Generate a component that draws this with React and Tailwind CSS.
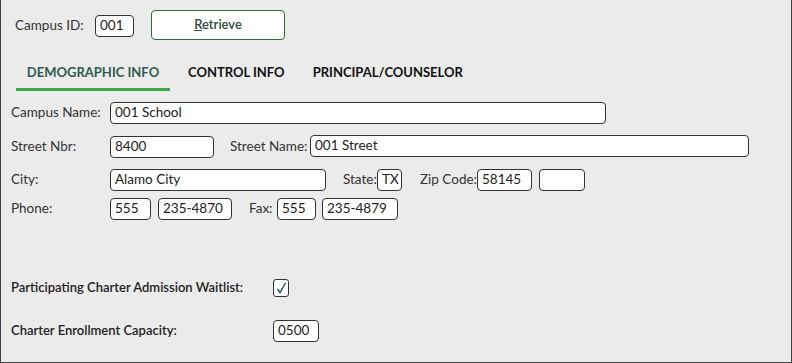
import React from 'react';

const Field = ({ value = '', className = '' }) => (
  <div className={`h-[22px] bg-white border border-[#333] rounded-[4px] px-[4px] flex items-center text-[13.5px] text-[#222] ${className}`}>
    {value}
  </div>
);

const Label = ({ children, className = '' }) => (
  <span className={`text-[13.5px] text-[#333] whitespace-nowrap ${className}`}>{children}</span>
);

const App = () => {
  return (
    <div className="w-[792px] h-[363px] bg-[#ebebeb] border-x border-b border-[#444] relative overflow-hidden" style={{ fontFamily: 'Lato, "Noto Sans", sans-serif' }}>
      {/* Campus lookup */}
      <div className="flex items-center pl-[14px] pt-[10px] h-[40px]">
        <Label className="w-[80px]">Campus ID:</Label>
        <Field value="001" className="w-[39px] mt-[1px]" />
        <button className="ml-[17px] w-[134px] h-[30px] bg-white border border-[#2e6b30] rounded-[4px] text-[13px] font-semibold text-[#2f4a3a]">
          <span className="underline">R</span>etrieve
        </button>
      </div>

      {/* Tabs */}
      <div className="flex pl-[15px] mt-[23px] text-[13px] font-bold">
        <div className="w-[154px] text-center text-[#2d5b4f] border-b-[3px] border-[#3aaa4a] pb-[5px]">DEMOGRAPHIC INFO</div>
        <div className="ml-[18px] text-[#111]">CONTROL INFO</div>
        <div className="ml-[28px] text-[#111]">PRINCIPAL/COUNSELOR</div>
      </div>

      <div className="pl-[10px] mt-[11px] flex flex-col">
        <div className="flex items-center h-[22px]">
          <Label className="w-[99px]">Campus Name:</Label>
          <Field value="001 School" className="w-[496px]" />
        </div>
        <div className="flex items-center h-[22px] mt-[12px]">
          <Label className="w-[99px]">Street Nbr:</Label>
          <Field value="8400" className="w-[104px]" />
          <Label className="ml-[16px] w-[80px]">Street Name:</Label>
          <Field value="001 Street" className="w-[439px] -mt-[2px]" />
        </div>
        <div className="flex items-center h-[22px] mt-[11px]">
          <Label className="w-[99px]">City:</Label>
          <Field value="Alamo City" className="w-[216px]" />
          <Label className="ml-[17px] w-[34px]">State:</Label>
          <Field value="TX" className="w-[25px]" />
          <Label className="ml-[18px] w-[57px]">Zip Code:</Label>
          <Field value="58145" className="w-[55px]" />
          <Field className="w-[46px] ml-[7px]" />
        </div>
        <div className="flex items-center h-[22px] mt-[7px]">
          <Label className="w-[99px]">Phone:</Label>
          <Field value="555" className="w-[41px]" />
          <Field value="235-4870" className="w-[74px] ml-[7px]" />
          <Label className="ml-[17px] w-[28px]">Fax:</Label>
          <Field value="555" className="w-[39px]" />
          <Field value="235-4879" className="w-[76px] ml-[6px]" />
        </div>

        <div className="flex items-center h-[18px] mt-[59px]">
          <span className="w-[262px] text-[13px] font-semibold text-[#222]">Participating Charter Admission Waitlist:</span>
          <div className="w-[16px] h-[18px] bg-white border border-[#333] rounded-[3px] flex items-center justify-center">
            <svg width="11" height="12" viewBox="0 0 11 12">
              <path d="M1.5 7 L4 10.5 L9.5 1" fill="none" stroke="#1a4a5a" strokeWidth="1.4" />
            </svg>
          </div>
        </div>
        <div className="flex items-center h-[22px] mt-[23px]">
          <span className="w-[262px] text-[13px] font-semibold text-[#222]">Charter Enrollment Capacity:</span>
          <Field value="0500" className="w-[46px]" />
        </div>
      </div>
    </div>
  );
};

export default App;
